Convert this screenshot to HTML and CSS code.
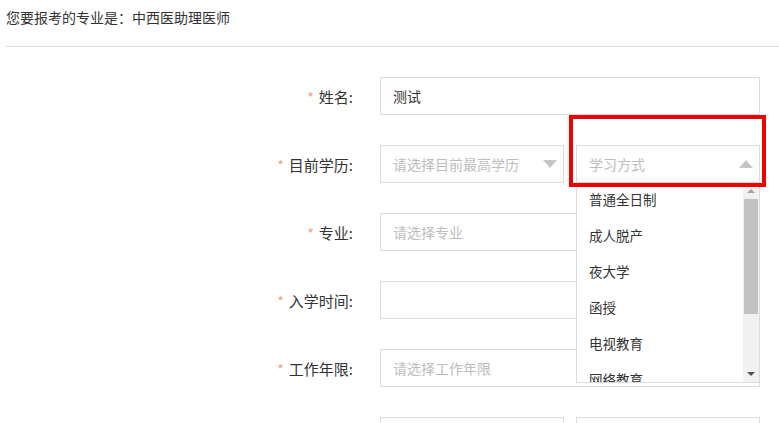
FILE: index.html
```html
<!DOCTYPE html>
<html lang="zh-CN">
<head>
<meta charset="utf-8">
<title>报名</title>
<link rel="stylesheet" href="styles.css">
</head>
<body>
<div class="page">
  <div class="intro">您要报考的专业是：中西医助理医师</div>
  <form class="form">
    <div class="row">
      <label class="label"><span class="star">*</span>姓名:</label>
      <div class="field"><div class="input">测试</div></div>
    </div>
    <div class="row">
      <label class="label"><span class="star">*</span>目前学历:</label>
      <div class="field pair">
        <div class="select">
          <span class="ph">请选择目前最高学历</span>
          <span class="tri down"></span>
        </div>
        <div class="select-wrap">
          <div class="select open">
            <span class="ph">学习方式</span>
            <span class="tri up"></span>
          </div>
          <div class="dropdown">
            <ul class="options">
              <li>普通全日制</li>
              <li>成人脱产</li>
              <li>夜大学</li>
              <li>函授</li>
              <li>电视教育</li>
              <li>网络教育</li>
            </ul>
            <div class="scrollbar">
              <div class="sb-btn"><span class="sb-arrow up-dis"></span></div>
              <div class="sb-thumb"></div>
              <div class="sb-track"></div>
              <div class="sb-btn"><span class="sb-arrow dn"></span></div>
            </div>
          </div>
          <div class="highlight"></div>
        </div>
      </div>
    </div>
    <div class="row">
      <label class="label"><span class="star">*</span>专业:</label>
      <div class="field"><div class="input"><span class="ph">请选择专业</span></div></div>
    </div>
    <div class="row">
      <label class="label"><span class="star">*</span>入学时间:</label>
      <div class="field"><div class="input"></div></div>
    </div>
    <div class="row">
      <label class="label"><span class="star">*</span>工作年限:</label>
      <div class="field"><div class="input"><span class="ph">请选择工作年限</span></div></div>
    </div>
    <div class="row">
      <label class="label"></label>
      <div class="field pair">
        <div class="input"></div>
        <div class="input"></div>
      </div>
    </div>
  </form>
</div>
</body>
</html>
```

FILE: styles.css
```css
html, body {
  margin: 0;
  padding: 0;
  overflow: hidden;
  background: #fff;
}
body {
  font-family: "Noto Sans CJK SC", "Noto Sans", sans-serif;
  color: #333;
  width: 779px;
  height: 423px;
}
.page {
  padding: 0 0 0 6px;
}
.intro {
  height: 34px;
  line-height: 34px;
  padding-bottom: 12px;
  font-size: 14px;
  border-bottom: 1px solid #dcdcdc;
  white-space: nowrap;
}
.form {
  margin-top: 30px;
  display: flex;
  flex-direction: column;
  gap: 30px;
}
.row {
  display: grid;
  grid-template-columns: 352px 380px;
  column-gap: 22px;
  height: 38px;
  align-items: center;
}
.label {
  text-align: right;
  font-size: 15px;
  color: #333;
  white-space: nowrap;
  padding-right: 5px;
}
.star {
  color: #f0a27a;
  font-size: 14px;
  margin-right: 5px;
}
.field {
  height: 38px;
}
.pair {
  display: grid;
  grid-template-columns: 184px 184px;
  column-gap: 12px;
}
.input, .select {
  box-sizing: border-box;
  height: 38px;
  border: 1px solid #dcdcdc;
  background: #fff;
  padding: 0 12px;
  font-size: 14px;
  line-height: 36px;
  color: #333;
  white-space: nowrap;
  overflow: hidden;
}
.select {
  display: flex;
  justify-content: space-between;
  align-items: center;
  padding-right: 6px;
}
.ph {
  color: #bdbdbd;
}
.tri {
  width: 0;
  height: 0;
  border-left: 7px solid transparent;
  border-right: 7px solid transparent;
}
.tri.down {
  border-top: 8px solid #c6c6c6;
}
.tri.up {
  border-bottom: 8px solid #c6c6c6;
}
.select-wrap {
  position: relative;
}
.dropdown {
  position: absolute;
  top: 38px;
  left: 0;
  width: 184px;
  height: 200px;
  box-sizing: border-box;
  border: 1px solid #dcdcdc;
  border-top: none;
  background: #fff;
  display: flex;
  z-index: 2;
}
.options {
  list-style: none;
  margin: -2px 0 0;
  padding: 0;
  flex: 1;
  overflow: hidden;
}
.options li {
  height: 36px;
  line-height: 36px;
  padding-left: 12px;
  font-size: 13.5px;
  color: #333;
  white-space: nowrap;
}
.scrollbar {
  width: 16px;
  display: flex;
  flex-direction: column;
  background: #f1f1f1;
}
.sb-btn {
  height: 16px;
  display: flex;
  align-items: center;
  justify-content: center;
  flex: none;
}
.sb-thumb {
  height: 115px;
  margin: 0 1px;
  background: #c1c1c1;
  flex: none;
}
.sb-track {
  flex: 1;
}
.sb-arrow {
  width: 0;
  height: 0;
  border-left: 4px solid transparent;
  border-right: 4px solid transparent;
}
.sb-arrow.up-dis {
  border-bottom: 4px solid #a3a3a3;
}
.sb-arrow.dn {
  border-top: 4px solid #505050;
}
.highlight {
  position: absolute;
  left: -7px;
  top: -30px;
  width: 197px;
  height: 72px;
  box-sizing: border-box;
  border: 4px solid #f00000;
  pointer-events: none;
  z-index: 3;
}
```
